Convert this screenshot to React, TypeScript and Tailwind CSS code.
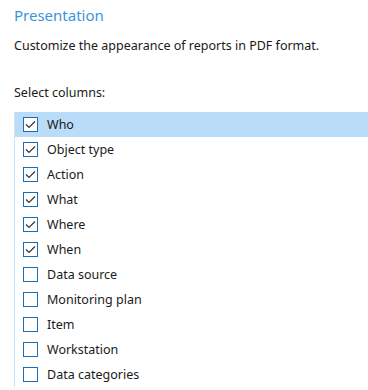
import { useState } from 'react'

const columns = [
  { label: 'Who', checked: true },
  { label: 'Object type', checked: true },
  { label: 'Action', checked: true },
  { label: 'What', checked: true },
  { label: 'Where', checked: true },
  { label: 'When', checked: true },
  { label: 'Data source', checked: false },
  { label: 'Monitoring plan', checked: false },
  { label: 'Item', checked: false },
  { label: 'Workstation', checked: false },
  { label: 'Data categories', checked: false },
]

export default function App() {
  const [items, setItems] = useState(columns)
  const [selected, setSelected] = useState(0)

  const toggle = (i: number) => {
    setSelected(i)
    setItems(prev => prev.map((it, j) => (j === i ? { ...it, checked: !it.checked } : it)))
  }

  return (
    <div
      className="h-[390px] w-[368px] overflow-hidden bg-white pl-[14px] text-[12.5px] text-[#1a1a1a]"
      style={{ fontFamily: '"Noto Sans", "Open Sans", sans-serif' }}
    >
      <h2 className="pt-[3px] text-[15px] leading-[24px] text-[#3b95dc]">Presentation</h2>
      <p className="mt-[10px] leading-[18px]">Customize the appearance of reports in PDF format.</p>
      <p className="mt-[29px] leading-[18px]">Select columns:</p>

      {/* column list */}
      <div className="mt-[10px] border-l border-[#cce4f7]">
        {items.map((item, i) => (
          <div
            key={item.label}
            onClick={() => toggle(i)}
            className={`flex h-[25px] cursor-default items-center gap-[9px] pl-[8px] ${
              i === selected ? 'bg-[#b9ddf9]' : ''
            }`}
          >
            <span className="flex h-[15px] w-[15px] items-center justify-center border border-[#1e6db4] bg-white">
              {item.checked && (
                <svg width="11" height="9" viewBox="0 0 11 9" fill="none">
                  <path d="M1 4.5 L4 7.5 L10 1.5" stroke="#333" strokeWidth="1.2" />
                </svg>
              )}
            </span>
            <span className="leading-[18px]">{item.label}</span>
          </div>
        ))}
      </div>
    </div>
  )
}
